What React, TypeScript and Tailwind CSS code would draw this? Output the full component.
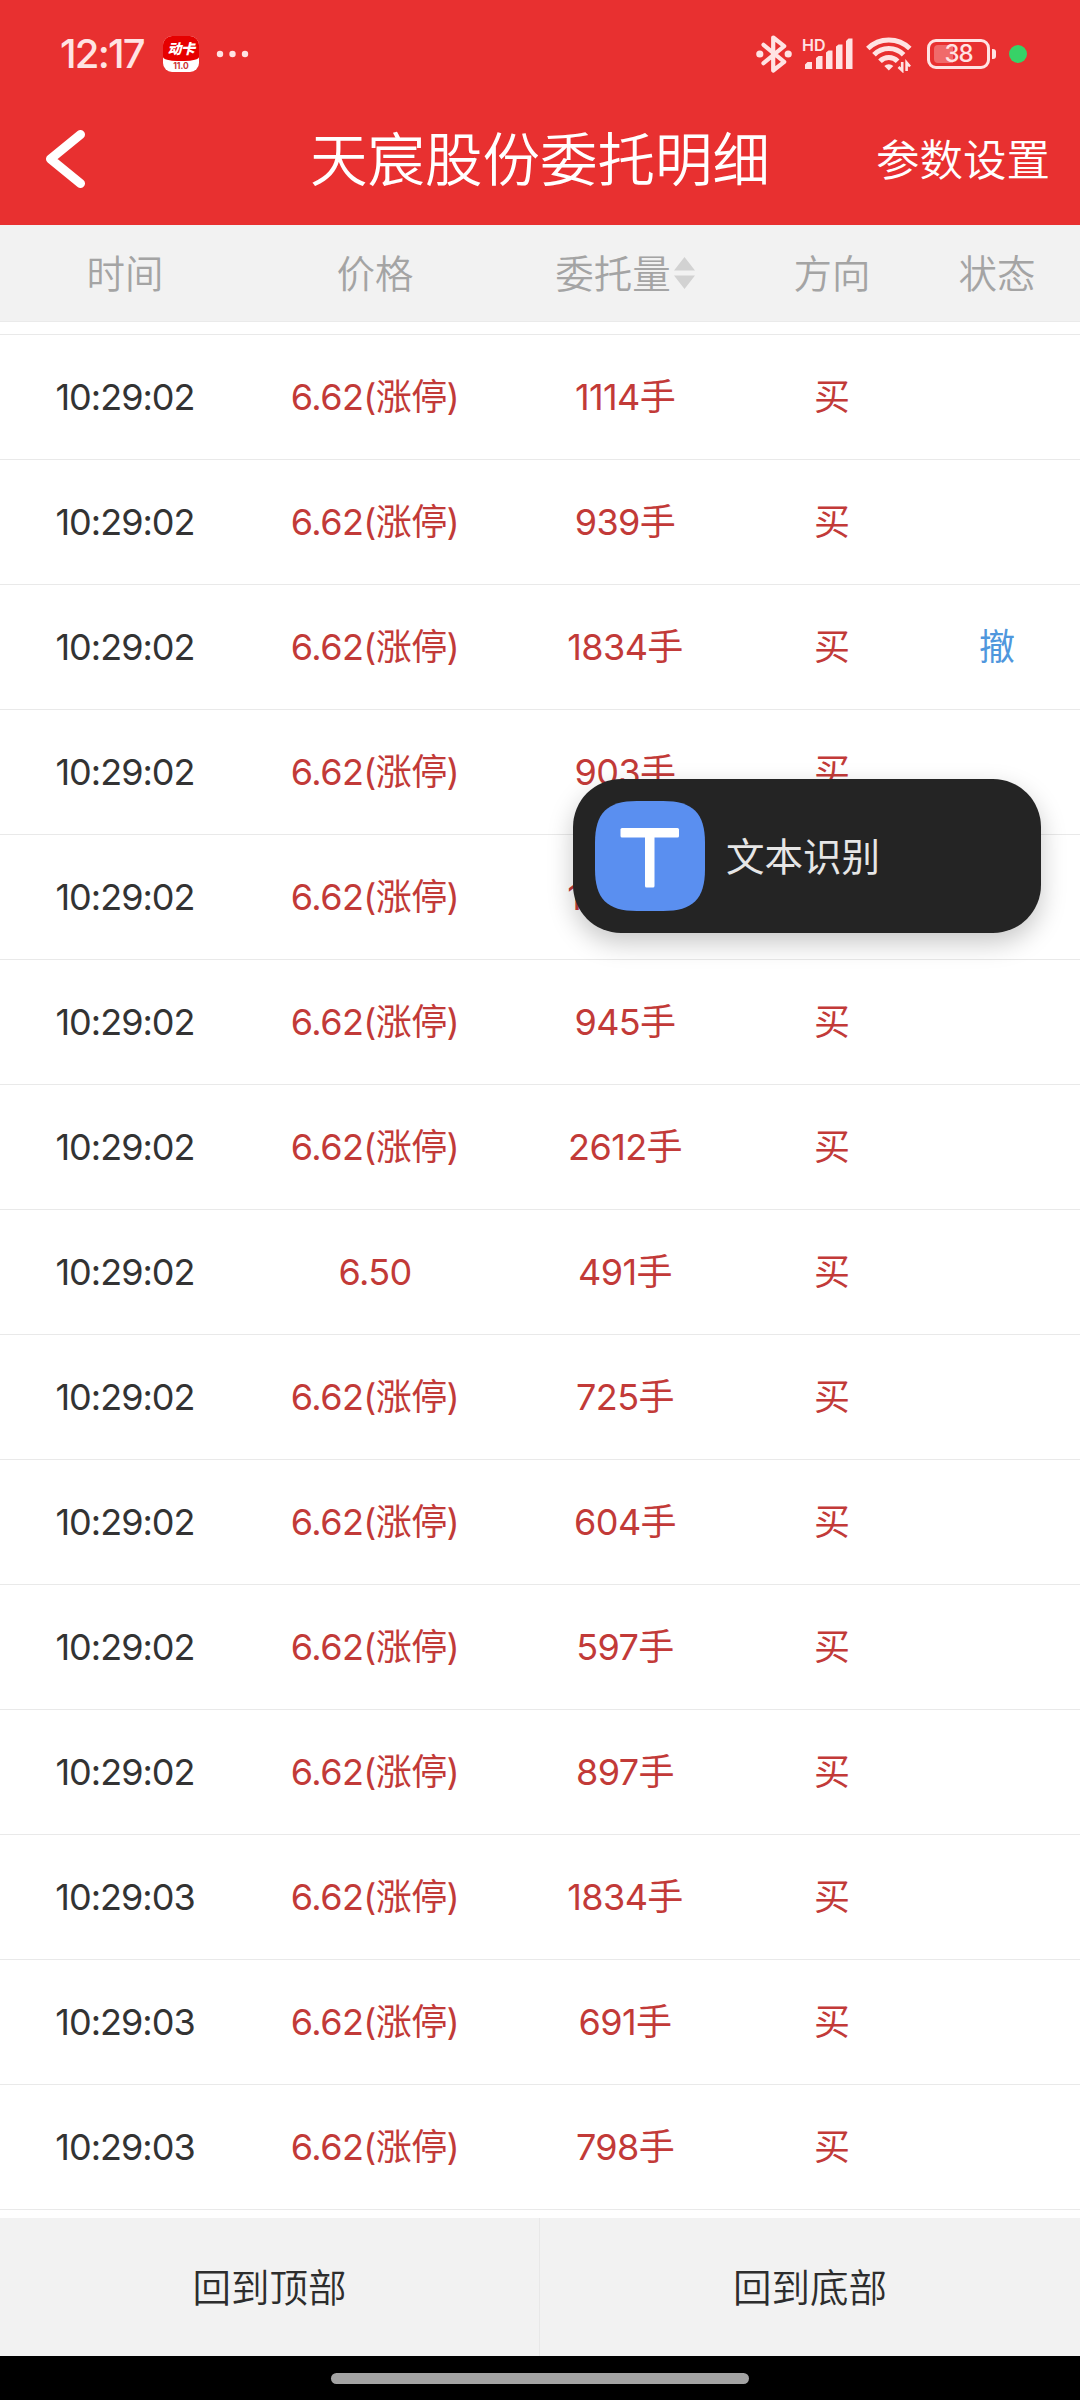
import { clsx } from "clsx";

type Order = {
  time: string;
  price: string;
  volume: string;
  canceled?: boolean;
};

const LIMIT_UP = "6.62(涨停)";

const orders: Order[] = [
  { time: "10:29:02", price: LIMIT_UP, volume: "1114手" },
  { time: "10:29:02", price: LIMIT_UP, volume: "939手" },
  { time: "10:29:02", price: LIMIT_UP, volume: "1834手", canceled: true },
  { time: "10:29:02", price: LIMIT_UP, volume: "903手" },
  { time: "10:29:02", price: LIMIT_UP, volume: "1834手" },
  { time: "10:29:02", price: LIMIT_UP, volume: "945手" },
  { time: "10:29:02", price: LIMIT_UP, volume: "2612手" },
  { time: "10:29:02", price: "6.50", volume: "491手" },
  { time: "10:29:02", price: LIMIT_UP, volume: "725手" },
  { time: "10:29:02", price: LIMIT_UP, volume: "604手" },
  { time: "10:29:02", price: LIMIT_UP, volume: "597手" },
  { time: "10:29:02", price: LIMIT_UP, volume: "897手" },
  { time: "10:29:03", price: LIMIT_UP, volume: "1834手" },
  { time: "10:29:03", price: LIMIT_UP, volume: "691手" },
  { time: "10:29:03", price: LIMIT_UP, volume: "798手" },
];

const columns = "grid grid-cols-[250px_250px_250px_164px_166px] items-center text-center";

function StatusBar() {
  return (
    <div className="flex h-[108px] items-center pl-[60px] pr-[53px] text-[#ffe3e3]">
      <span className="w-[103px] text-[40px] font-medium leading-none tracking-[-1.8px]">
        12:17
      </span>
      <div className="flex h-9 w-9 flex-col items-center overflow-hidden rounded-[9px] bg-white">
        <div className="flex h-[25px] w-full items-center justify-center rounded-b-[40%_4px] bg-[#e60000] text-[14px] font-black italic leading-none tracking-[-0.5px] text-white">
          动卡
        </div>
        <span className="mt-[1px] text-[8.5px] font-bold leading-none text-[#c33]">
          11.0
        </span>
      </div>
      <svg className="ml-[17px]" width="34" height="8" fill="currentColor">
        <circle cx="4" cy="4" r="3.2" />
        <circle cx="16.5" cy="4" r="3.2" />
        <circle cx="29" cy="4" r="3.2" />
      </svg>

      <svg className="ml-auto" width="36" height="40" viewBox="0 0 36 40">
        <path
          d="M7.5 10.8 28.2 27.8 17.2 36.5V3.5L28.2 12.2 7.5 29.2"
          fill="none"
          stroke="currentColor"
          strokeWidth="4.2"
          strokeLinecap="round"
          strokeLinejoin="round"
        />
        <circle cx="3.8" cy="20" r="3.6" fill="currentColor" />
        <circle cx="32.2" cy="20" r="3.6" fill="currentColor" />
      </svg>

      <div className="relative ml-[11px] h-[34px] w-[50px]">
        <span className="absolute left-[-1px] top-0 text-[16px] font-semibold leading-none">
          HD
        </span>
        <svg width="50" height="34" viewBox="0 0 50 34" fill="currentColor">
          <path d="M2 27.500 4.500 25H9v7H2zM13 21l2.500-2H19.500v13H13zM23 15.500l2.500-2H29.500V32H23zM33 9.500l2.500-2h4V32H33zM43 4l2.500-2.500h4V32H43z" />
        </svg>
      </div>

      <svg className="ml-[13px]" width="46" height="38" viewBox="0 0 46 38">
        <g fill="none" stroke="currentColor" strokeWidth="5">
          <path d="M1.800 13.500a30 30 0 0 1 42 0" />
          <path d="M8 19.800a20.500 20.500 0 0 1 29.600 0" />
          <path d="M14 26.300a12 12 0 0 1 17.600 0" />
        </g>
        <path d="M18.300 31a6.500 6.500 0 0 1 9 0l-4.500 4.500z" fill="currentColor" />
        <path
          d="M36.200 27v8.500L32.500 32M40.600 36v-8.500l3.400 4"
          fill="none"
          stroke="currentColor"
          strokeWidth="2.600"
        />
      </svg>

      <div className="ml-[15px] flex items-center gap-[2px]">
        <div className="relative flex h-[30px] w-[63px] items-center justify-center rounded-[9px] border-[3px] border-current">
          <div className="absolute left-1 top-[3px] h-[18px] w-[19px] rounded-l-[4px] bg-[#f06a6a]" />
          <span className="relative text-[24px] font-medium leading-none tracking-[-1px]">
            38
          </span>
        </div>
        <div className="h-[10px] w-[4px] rounded-r-[3px] bg-current" />
      </div>
      <div className="ml-[13px] h-[18px] w-[18px] rounded-full bg-[#37d267]" />
    </div>
  );
}

function TitleBar() {
  return (
    <div className="grid h-[117px] grid-cols-[240px_600px_240px] items-center pb-[14px] text-white">
      <svg className="mb-[2px] ml-[44px]" width="42" height="60" viewBox="0 0 42 60">
        <path
          d="M36.500 5.500 6.500 30 36.500 54.500"
          fill="none"
          stroke="currentColor"
          strokeWidth="9"
          strokeLinecap="round"
          strokeLinejoin="round"
        />
      </svg>
      <h1 className="pt-[2px] text-center text-[57.5px] font-[350] leading-none">
        天宸股份委托明细
      </h1>
      <span className="pr-[30px] pt-[2px] text-right text-[43.5px] font-[350] leading-none">
        参数设置
      </span>
    </div>
  );
}

function ListHeader() {
  return (
    <div
      className={clsx(
        columns,
        "h-[97px] border-b border-[#eaeaea] bg-[#f2f2f2] pt-[2px] text-[38.5px] font-[350] leading-none text-[#a4a4a4]",
      )}
    >
      <span>时间</span>
      <span>价格</span>
      <span className="flex items-center justify-center gap-[3px]">
        委托量
        <svg className="mb-[2px]" width="21" height="32" viewBox="0 0 21 32" fill="#d2d2d2">
          <path d="M10.500 0 21 13.500H0zM0 18.500h21L10.500 32z" />
        </svg>
      </span>
      <span>方向</span>
      <span>状态</span>
    </div>
  );
}

function OrderRow({ order }: { order: Order }) {
  return (
    <div
      className={clsx(
        columns,
        "h-[125px] border-t border-[#e9e9e9] text-[36px] leading-none text-[#c23a38]",
      )}
    >
      <span className="tracking-[-1px] text-[#333]">{order.time}</span>
      <span className="tracking-[-0.6px]">{order.price}</span>
      <span className="tracking-[-0.6px]">{order.volume}</span>
      <span>买</span>
      <span className="text-[#4f97dd]">{order.canceled && "撤"}</span>
    </div>
  );
}

function TextRecognitionToast() {
  return (
    <div className="absolute left-[573px] top-[779px] flex h-[154px] w-[468px] items-center rounded-[48px] bg-[#242424] pl-[22px] shadow-[0_10px_26px_rgba(0,0,0,0.22)]">
      <svg width="110" height="110" viewBox="0 0 110 110">
        <path
          d="M0 55V42C0 12 12 0 42 0h26c30 0 42 12 42 42v26c0 30-12 42-42 42H42C12 110 0 98 0 68z"
          fill="#5a8ff0"
        />
        <rect x="25.500" y="27" width="58.500" height="9.500" rx="1.500" fill="#fff" />
        <rect x="50" y="27" width="9.500" height="59.500" rx="1.500" fill="#fff" />
      </svg>
      <span className="ml-[21px] pt-[2px] text-[38.5px] leading-none text-[#e6e6e6]">
        文本识别
      </span>
    </div>
  );
}

export default function App() {
  return (
    <div className="relative flex h-[2400px] w-[1080px] flex-col overflow-hidden bg-white font-['Inter','Noto_Sans_CJK_SC',sans-serif]">
      <header className="bg-[#e83030]">
        <StatusBar />
        <TitleBar />
      </header>

      <ListHeader />

      <main className="mt-3 flex-1">
        {orders.map((order, idx) => (
          <OrderRow key={idx} order={order} />
        ))}
        <div className="border-t border-[#e9e9e9]" />
      </main>

      <footer className="grid h-[138px] grid-cols-2 items-center bg-[#f2f2f2] text-[38.5px] font-[350] leading-none text-[#2d2d2d]">
        <button className="h-full border-r border-[#e8e8e8] pt-[2px]">回到顶部</button>
        <button className="h-full pt-[2px]">回到底部</button>
      </footer>
      <div className="flex h-11 items-center justify-center bg-black">
        <div className="h-[11px] w-[418px] rounded-full bg-[#a3a3a3]" />
      </div>

      <TextRecognitionToast />
    </div>
  );
}
